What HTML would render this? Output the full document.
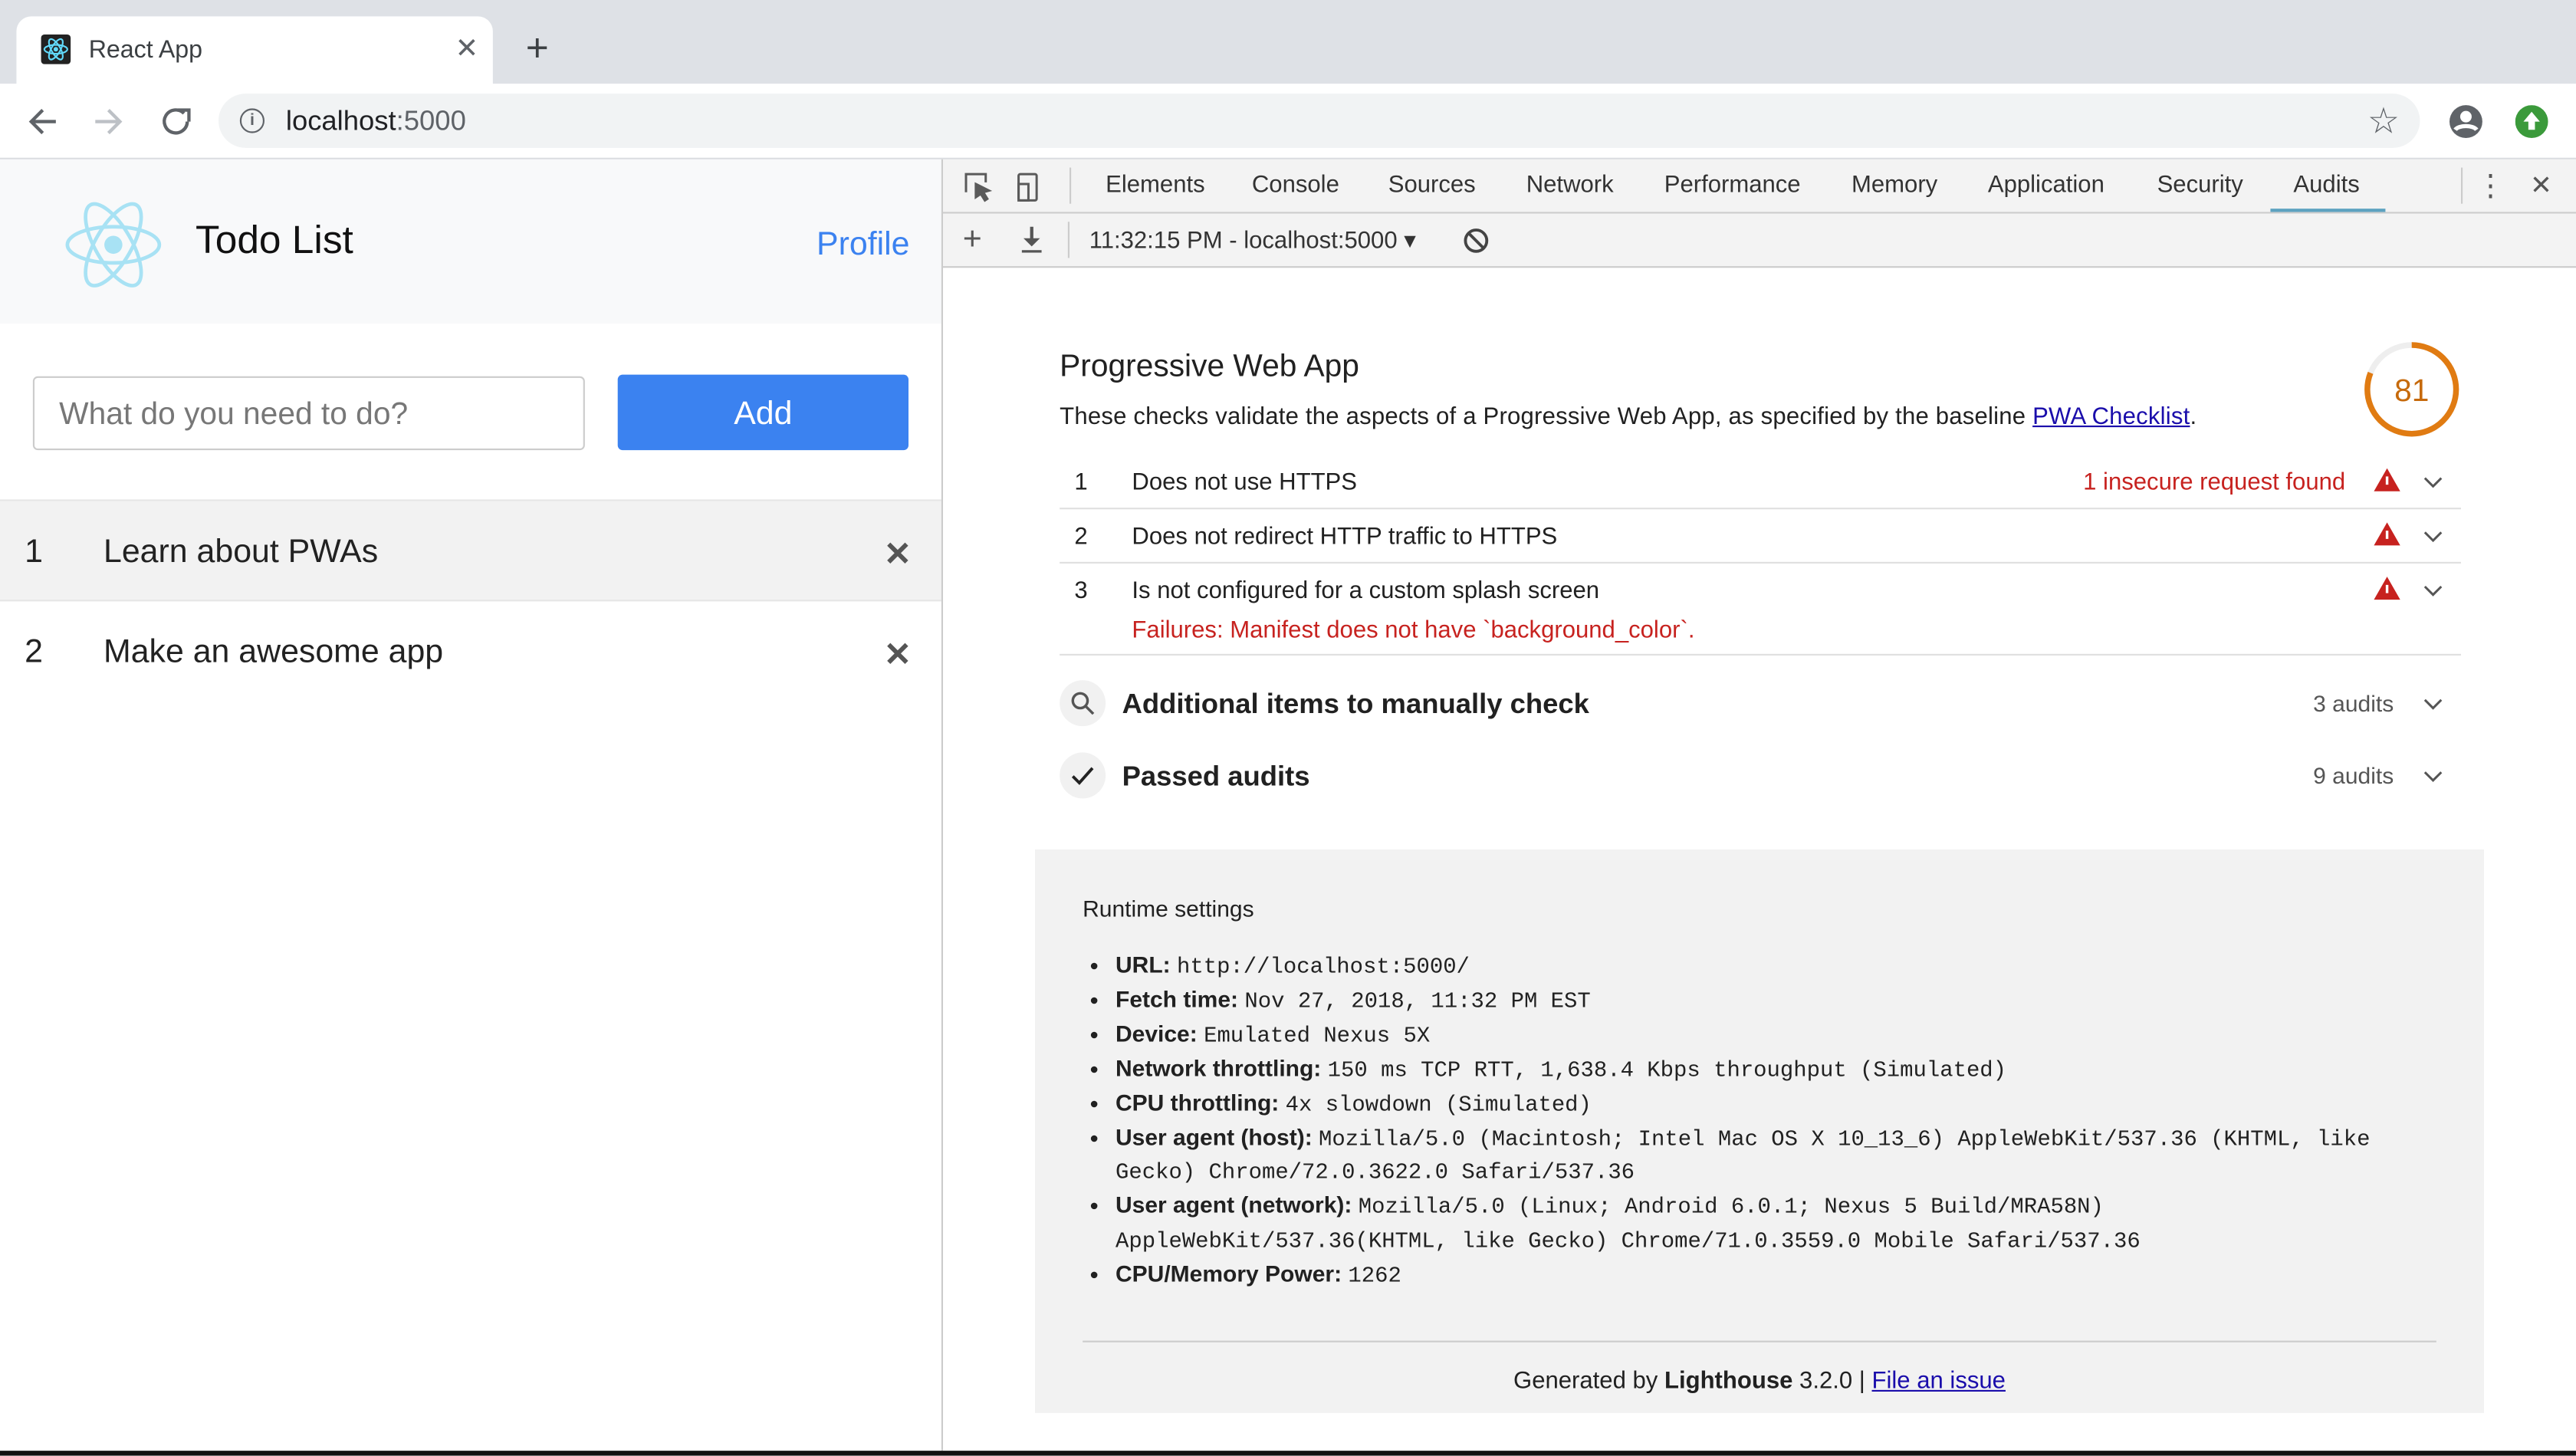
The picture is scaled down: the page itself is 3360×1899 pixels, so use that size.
<!DOCTYPE html>
<html><head><meta charset="utf-8"><style>
html,body{margin:0;padding:0;width:3360px;height:1898px;overflow:hidden;background:#fff}
#w{position:absolute;left:0;top:0;width:1568px;height:886px;transform:scale(2.142857);transform-origin:0 0;font-family:"Liberation Sans",sans-serif;color:#202124}
.a{position:absolute}
.mono{font-family:"Liberation Mono",monospace;font-size:13.5px;line-height:0}
ul li{line-height:20.9px;height:auto}
</style></head><body><div id="w">
<div class="a" style="left:0;top:0;width:1568px;height:51px;background:#dee1e6"></div>
<div class="a" style="left:10px;top:10px;width:290px;height:42px;background:#fff;border-radius:9px 9px 0 0"></div>
<div class="a" style="left:25px;top:21px;width:18px;height:18px;background:#222;border-radius:2px"></div>
<svg class="a" style="left:25px;top:21px" width="18" height="18" viewBox="0 0 18 18"><g fill="none" stroke="#61dafb" stroke-width="1"><ellipse cx="9" cy="9" rx="7" ry="2.7"/><ellipse cx="9" cy="9" rx="7" ry="2.7" transform="rotate(60 9 9)"/><ellipse cx="9" cy="9" rx="7" ry="2.7" transform="rotate(120 9 9)"/></g><circle cx="9" cy="9" r="1.4" fill="#61dafb"/></svg>
<div class="a" style="left:54px;top:22px;font-size:15px;color:#3c4043">React App</div>
<div class="a" style="left:277px;top:20px;font-size:17px;color:#5f6368">✕</div>
<div class="a" style="left:320px;top:16px;font-size:24px;color:#3c4043">+</div>
<div class="a" style="left:0;top:51px;width:1568px;height:45px;background:#fff;border-bottom:1px solid #dadce0"></div>
<svg class="a" style="left:16px;top:63px" width="110" height="22" viewBox="0 0 110 22" fill="none" stroke-width="2"><path d="M18 11H4M10 4l-7 7 7 7" stroke="#5f6368"/><path d="M42 11h14M50 4l7 7-7 7" stroke="#bdc1c6"/><path d="M96 6a7 7 0 1 0 2 5" stroke="#5f6368"/><path d="M92 4h7v7" stroke="#5f6368" fill="none"/></svg>
<div class="a" style="left:133px;top:57px;width:1340px;height:33px;background:#f1f3f4;border-radius:17px"></div>
<div class="a" style="left:146px;top:66px;width:13px;height:13px;border:1.6px solid #5f6368;border-radius:50%;font-size:10px;line-height:13px;text-align:center;color:#5f6368;font-weight:bold">i</div>
<div class="a" style="left:174px;top:64px;font-size:17px;color:#202124">localhost<span style="color:#5f6368">:5000</span></div>
<div class="a" style="left:1441px;top:61px;font-size:22px;color:#5f6368">☆</div>
<svg class="a" style="left:1490px;top:63px" width="22" height="22" viewBox="0 0 22 22"><circle cx="11" cy="11" r="10" fill="#5f6368"/><circle cx="11" cy="8" r="3.5" fill="#fff"/><path d="M4.5 16c2-3 11-3 13 0" stroke="#fff" stroke-width="2.5" fill="none"/></svg>
<svg class="a" style="left:1531px;top:64px" width="20" height="20" viewBox="0 0 20 20"><circle cx="10" cy="10" r="10" fill="#3b9a3b"/><path d="M10 4l5 6h-3v5H8v-5H5z" fill="#fff"/></svg>
<!-- left page -->
<div class="a" style="left:0;top:97px;width:573px;height:100px;background:#f8f9fa"></div>
<svg class="a" style="left:38px;top:119px" width="62" height="60" viewBox="0 0 62 60"><g fill="none" stroke="#a8e2f4" stroke-width="2.2"><ellipse cx="31" cy="30" rx="28" ry="11"/><ellipse cx="31" cy="30" rx="28" ry="11" transform="rotate(60 31 30)"/><ellipse cx="31" cy="30" rx="28" ry="11" transform="rotate(120 31 30)"/></g><circle cx="31" cy="30" r="5.5" fill="#a8e2f4"/></svg>
<div class="a" style="left:119px;top:133px;font-size:24px;color:#111">Todo List</div>
<div class="a" style="left:497px;top:138px;font-size:20px;color:#3b82f0">Profile</div>
<div class="a" style="left:20px;top:229px;width:334px;height:43px;border:1px solid #ccc;border-radius:3px;background:#fff"></div>
<div class="a" style="left:36px;top:242px;font-size:19px;color:#777">What do you need to do?</div>
<div class="a" style="left:376px;top:228px;width:177px;height:46px;background:#3b82f0;border-radius:3px;color:#fff;font-size:20px;line-height:48px;text-align:center">Add</div>
<div class="a" style="left:0;top:304px;width:573px;height:60px;background:#f2f2f2;border-top:1px solid #e6e6e6;border-bottom:1px solid #e6e6e6"></div>
<div class="a" style="left:15px;top:325px;font-size:20px;color:#222">1</div>
<div class="a" style="left:63px;top:325px;font-size:20px;color:#222">Learn about PWAs</div>
<div class="a" style="left:538px;top:325px;font-size:20px;color:#555;font-weight:bold">✕</div>
<div class="a" style="left:15px;top:386px;font-size:20px;color:#222">2</div>
<div class="a" style="left:63px;top:386px;font-size:20px;color:#222">Make an awesome app</div>
<div class="a" style="left:538px;top:386px;font-size:20px;color:#555;font-weight:bold">✕</div>
<div class="a" style="left:573px;top:97px;width:1px;height:786px;background:#ccc"></div>
<!-- devtools -->
<div class="a" style="left:574px;top:97px;width:994px;height:32px;background:#f3f3f3;border-bottom:1px solid #ccc"></div>
<svg class="a" style="left:585px;top:103px" width="52" height="20" viewBox="0 0 52 20" fill="none" stroke="#5a5a5a" stroke-width="1.4"><path d="M3 14V3h12v5"/><path d="M9 9l8 4-3.5 1 2.5 4-1.5 1-2.5-4-3 2z" fill="#5a5a5a"/><rect x="35" y="3" width="11" height="16" rx="1"/><rect x="35" y="9" width="6" height="10"/></svg>
<div class="a" style="left:651px;top:102px;width:1px;height:22px;background:#ccc"></div>
<div class="a" style="left:673px;top:105px;font-size:14.5px;color:#333">
<span style="position:absolute;left:0">Elements</span><span style="position:absolute;left:89px">Console</span><span style="position:absolute;left:172px">Sources</span><span style="position:absolute;left:256px">Network</span><span style="position:absolute;left:340px">Performance</span><span style="position:absolute;left:454px">Memory</span><span style="position:absolute;left:537px">Application</span><span style="position:absolute;left:640px">Security</span><span style="position:absolute;left:723px">Audits</span></div>
<div class="a" style="left:1382px;top:127px;width:70px;height:2px;background:#5da2c0"></div>
<div class="a" style="left:1498px;top:102px;width:1px;height:22px;background:#ccc"></div>
<div class="a" style="left:1507px;top:102px;font-size:18px;color:#555;line-height:22px">⋮</div>
<div class="a" style="left:1540px;top:103px;font-size:16px;color:#555">✕</div>
<div class="a" style="left:574px;top:130px;width:994px;height:32px;background:#f3f3f3;border-bottom:1px solid #ccc"></div>
<div class="a" style="left:586px;top:135px;font-size:20px;color:#555">+</div>
<svg class="a" style="left:620px;top:137px" width="16" height="18" viewBox="0 0 16 18"><path d="M8 1v9" stroke="#555" stroke-width="2"/><path d="M3 8l5 5 5-5z" fill="#555"/><path d="M2 16h12" stroke="#555" stroke-width="1.5"/></svg>
<div class="a" style="left:650px;top:135px;width:1px;height:22px;background:#ccc"></div>
<div class="a" style="left:663px;top:139px;font-size:14.5px;color:#333">11:32:15 PM - localhost:5000 ▾</div>
<svg class="a" style="left:890px;top:138px" width="17" height="17" viewBox="0 0 17 17" fill="none" stroke="#444" stroke-width="1.8"><circle cx="8.5" cy="8.5" r="6.5"/><path d="M4 4l9 9"/></svg>
<!-- report -->
<div class="a" style="left:645px;top:213px;font-size:19px;color:#212121">Progressive Web App</div>
<div class="a" style="left:645px;top:246px;font-size:14.5px;color:#212121;letter-spacing:0.1px">These checks validate the aspects of a Progressive Web App, as specified by the baseline <span style="color:#1a0dab;text-decoration:underline">PWA Checklist</span>.</div>
<svg class="a" style="left:1438px;top:207px" width="60" height="60" viewBox="0 0 60 60"><circle cx="30" cy="30" r="27" fill="none" stroke="#eee" stroke-width="3.5"/><circle cx="30" cy="30" r="27" fill="none" stroke="#e07b12" stroke-width="3.5" stroke-dasharray="137.4 200" transform="rotate(-90 30 30)"/><text x="30" y="37" text-anchor="middle" font-family="Liberation Sans" font-size="19" fill="#c66a0c">81</text></svg>
<div class="a" style="left:654px;top:286px;font-size:14.5px;color:#212121">1</div>
<div class="a" style="left:689px;top:286px;font-size:14.5px;color:#212121">Does not use HTTPS</div>
<div class="a" style="left:1268px;top:286px;font-size:14.5px;color:#c7221f">1 insecure request found</div>
<div class="a" style="left:645px;top:309px;width:853px;height:1px;background:#e0e0e0"></div>
<div class="a" style="left:654px;top:319px;font-size:14.5px;color:#212121">2</div>
<div class="a" style="left:689px;top:319px;font-size:14.5px;color:#212121">Does not redirect HTTP traffic to HTTPS</div>
<div class="a" style="left:645px;top:342px;width:853px;height:1px;background:#e0e0e0"></div>
<div class="a" style="left:654px;top:352px;font-size:14.5px;color:#212121">3</div>
<div class="a" style="left:689px;top:352px;font-size:14.5px;color:#212121">Is not configured for a custom splash screen</div>
<div class="a" style="left:689px;top:376px;font-size:14.5px;color:#c7221f">Failures: Manifest does not have `background_color`.</div>
<div class="a" style="left:645px;top:398px;width:853px;height:1px;background:#e0e0e0"></div>
<svg class="a" style="left:1444px;top:285px" width="45" height="90" viewBox="0 0 45 90"><g fill="#c7221f"><path d="M9 0l8 14H1z"/><path d="M9 33l8 14H1z"/><path d="M9 66l8 14H1z"/></g><g fill="#fff"><rect x="8.2" y="5" width="1.6" height="5"/><rect x="8.2" y="38" width="1.6" height="5"/><rect x="8.2" y="71" width="1.6" height="5"/></g><g fill="none" stroke="#555" stroke-width="1.4"><path d="M32 6l5 5 5-5"/><path d="M32 39l5 5 5-5"/><path d="M32 72l5 5 5-5"/></g></svg>
<div class="a" style="left:645px;top:414px;width:28px;height:28px;border-radius:50%;background:#f1f1f1"></div>
<svg class="a" style="left:651px;top:420px" width="16" height="16" viewBox="0 0 16 16" fill="none" stroke="#555" stroke-width="1.6"><circle cx="6.5" cy="6.5" r="4.5"/><path d="M10 10l4.5 4.5"/></svg>
<div class="a" style="left:683px;top:419px;font-size:17px;font-weight:bold;color:#212121">Additional items to manually check</div>
<div class="a" style="left:1408px;top:420px;font-size:14px;color:#555">3 audits</div>
<div class="a" style="left:645px;top:458px;width:28px;height:28px;border-radius:50%;background:#f1f1f1"></div>
<svg class="a" style="left:651px;top:464px" width="16" height="16" viewBox="0 0 16 16" fill="none" stroke="#222" stroke-width="1.8"><path d="M2 8.5l4 4 8-9"/></svg>
<div class="a" style="left:683px;top:463px;font-size:17px;font-weight:bold;color:#212121">Passed audits</div>
<div class="a" style="left:1408px;top:464px;font-size:14px;color:#555">9 audits</div>
<svg class="a" style="left:1474px;top:423px" width="14" height="56" viewBox="0 0 14 56" fill="none" stroke="#555" stroke-width="1.4"><path d="M2 3l5 5 5-5"/><path d="M2 47l5 5 5-5"/></svg>
<div class="a" style="left:630px;top:517px;width:882px;height:343px;background:#f2f2f2"></div>
<div class="a" style="left:659px;top:545px;font-size:14px;color:#212121">Runtime settings</div>
<ul class="a" style="left:659px;top:577px;margin:0;padding-left:20px;font-size:14px;line-height:20.9px;color:#212121;width:800px">
<li><b>URL:</b> <span class="mono">http://localhost:5000/</span></li>
<li><b>Fetch time:</b> <span class="mono">Nov 27, 2018, 11:32 PM EST</span></li>
<li><b>Device:</b> <span class="mono">Emulated Nexus 5X</span></li>
<li><b>Network throttling:</b> <span class="mono">150 ms TCP RTT, 1,638.4 Kbps throughput (Simulated)</span></li>
<li><b>CPU throttling:</b> <span class="mono">4x slowdown (Simulated)</span></li>
<li><b>User agent (host):</b> <span class="mono">Mozilla/5.0 (Macintosh; Intel Mac OS X 10_13_6) AppleWebKit/537.36 (KHTML, like Gecko) Chrome/72.0.3622.0 Safari/537.36</span></li>
<li><b>User agent (network):</b> <span class="mono">Mozilla/5.0 (Linux; Android 6.0.1; Nexus 5 Build/MRA58N)<br>AppleWebKit/537.36(KHTML, like Gecko) Chrome/71.0.3559.0 Mobile Safari/537.36</span></li>
<li><b>CPU/Memory Power:</b> <span class="mono">1262</span></li>
</ul>
<div class="a" style="left:659px;top:816px;width:824px;height:1px;background:#ccc"></div>
<div class="a" style="left:630px;top:833px;width:882px;text-align:center;font-size:14.5px;color:#212121">Generated by <b>Lighthouse</b> 3.2.0 | <span style="color:#1a0dab;text-decoration:underline">File an issue</span></div>
<div class="a" style="left:0;top:883px;width:1568px;height:3px;background:#111"></div>
</div></body></html>
